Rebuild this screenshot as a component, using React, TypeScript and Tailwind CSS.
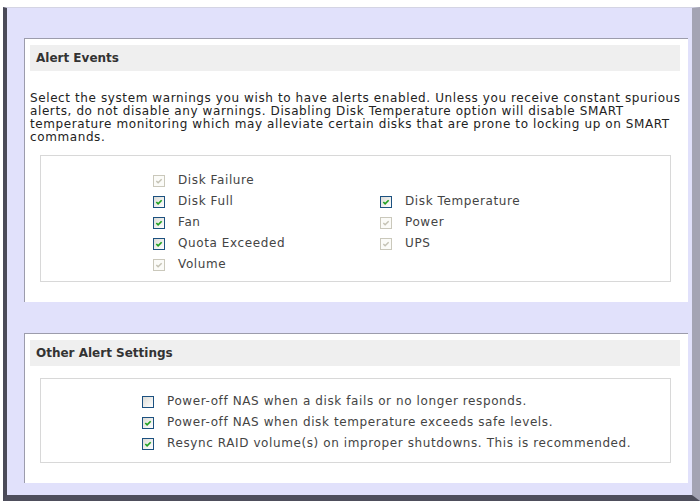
import React from "react";

type State = "on" | "off" | "locked";

function Check({ state }: { state: State }) {
  if (state === "locked") {
    return (
      <span className="flex h-[12px] w-[12px] shrink-0 items-center justify-center border border-[#cac8bb] bg-[#fbfbf8]">
        <svg width="8" height="8" viewBox="0 0 9 9">
          <path d="M1.5 4.5 L3.5 6.5 L7.5 2.5" fill="none" stroke="#c4c2b4" strokeWidth="1.6" />
        </svg>
      </span>
    );
  }
  return (
    <span className="flex h-[12px] w-[12px] shrink-0 items-center justify-center border border-[#1c5180] bg-gradient-to-br from-[#dcdcd7] to-[#ffffff]">
      {state === "on" && (
        <svg width="8" height="8" viewBox="0 0 9 9">
          <path d="M1.5 4.5 L3.5 6.5 L7.5 2.5" fill="none" stroke="#21a121" strokeWidth="1.9" />
        </svg>
      )}
    </span>
  );
}

function Option({ label, state }: { label: string; state: State }) {
  return (
    <div className="flex h-[21px] items-center gap-[13px]">
      <Check state={state} />
      <span className="tracking-[0.6px] whitespace-nowrap text-[#444]">{label}</span>
    </div>
  );
}

function Header({ title }: { title: string }) {
  return (
    <div className="mr-[8px] ml-[5px] flex h-[26px] items-center bg-[#efefef] pl-[6px] font-bold text-[#333]">
      {title}
    </div>
  );
}

export default function App() {
  return (
    <div
      className="h-[501px] w-[700px] overflow-hidden bg-white text-[12px] leading-[13px]"
      style={{ fontFamily: '"DejaVu Sans", Verdana, sans-serif' }}
    >
      <div className="mt-[7px] ml-[3px] h-[494px] w-[697px] border-t border-r-[8px] border-b-[6px] border-l-4 border-t-[#d4d4e4] border-r-[#a4a4b4] border-b-[#4e4e5c] border-l-[#4a4a58] bg-[#e1e1fb] pt-[30px] pr-[4px] pl-[17px]">
        <section className="h-[264px] border-t border-l border-[#9c9cac] bg-white pt-[6px]">
          <Header title="Alert Events" />
          <p className="mt-[21px] mr-[8px] ml-[5px] tracking-[0.6px] whitespace-nowrap text-[#222]">
            Select the system warnings you wish to have alerts enabled. Unless you receive constant spurious
            <br />
            alerts, do not disable any warnings. Disabling Disk Temperature option will disable SMART
            <br />
            temperature monitoring which may alleviate certain disks that are prone to locking up on SMART
            <br />
            commands.
          </p>
          <div className="mt-[11px] mr-[17px] ml-[15px] h-[127px] border border-[#d8d8d8] pt-[14px] pl-[112px]">
            <div className="flex">
              <div className="w-[227px]">
                <Option label="Disk Failure" state="locked" />
                <Option label="Disk Full" state="on" />
                <Option label="Fan" state="on" />
                <Option label="Quota Exceeded" state="on" />
                <Option label="Volume" state="locked" />
              </div>
              <div className="pt-[21px]">
                <Option label="Disk Temperature" state="on" />
                <Option label="Power" state="locked" />
                <Option label="UPS" state="locked" />
              </div>
            </div>
          </div>
        </section>
        <section className="mt-[31px] h-[150px] border-t border-l border-[#9c9cac] bg-white pt-[6px]">
          <Header title="Other Alert Settings" />
          <div className="mt-[12px] mr-[17px] ml-[15px] h-[85px] border border-[#d8d8d8] pt-[12px] pl-[101px]">
            <Option label="Power-off NAS when a disk fails or no longer responds." state="off" />
            <Option label="Power-off NAS when disk temperature exceeds safe levels." state="on" />
            <Option label="Resync RAID volume(s) on improper shutdowns. This is recommended." state="on" />
          </div>
        </section>
      </div>
    </div>
  );
}
